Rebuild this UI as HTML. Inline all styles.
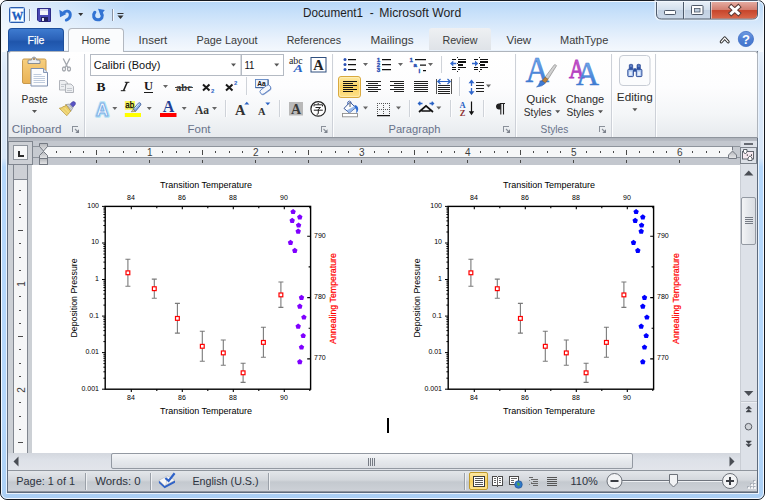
<!DOCTYPE html>
<html>
<head>
<meta charset="utf-8">
<title>Document1 - Microsoft Word</title>
<style>
html,body{margin:0;padding:0;background:#fff;}
body{width:765px;height:500px;overflow:hidden;position:relative;font-family:"Liberation Sans",sans-serif;font-size:12px;color:#222;}
.abs{position:absolute;}
#win{position:absolute;left:0;top:0;width:763px;height:498px;border:1px solid #15191f;border-radius:7px;
 background:linear-gradient(180deg,#b8d8f8 0,#dcebfb 28px,#e6f0fb 50px,#dbe8f9 70px,#d8e7f8 157px,#b4d7fb 166px,#b4d7fb 420px,#abcff4 498px);overflow:hidden;}
#win:before{content:"";position:absolute;left:0;top:0;right:0;bottom:0;border:1px solid #f3f8fe;border-radius:6px;z-index:3;}
#titlebg{position:absolute;left:1px;top:1px;width:761px;height:50px;background:linear-gradient(90deg,rgba(255,255,255,.6) 0,rgba(255,255,255,.45) 40px,rgba(255,255,255,0) 125px),linear-gradient(180deg,#b8d8f8 0,#c9e1fa 12px,#dcebfb 27px,#eaf2fc 38px,#f5f9fd 50px);}
#content{position:absolute;left:6px;top:50px;width:749px;height:441px;background:#ccd0d5;border:1px solid #5f6b7c;border-top:none;box-shadow:0 0 0 1px #e9f2fc;}
.t{position:absolute;white-space:nowrap;line-height:1;}
/* title */
#title{left:301px;top:7px;font-size:13.6px;color:#1e1e1e;}
/* tabs */
.tab{position:absolute;top:33px;font-size:12.3px;color:#3b3b3b;white-space:nowrap;line-height:1;}
#filetab{position:absolute;left:8px;top:28px;width:56px;height:24px;border-radius:4px 4px 0 0;border:1px solid #1d4f9c;border-bottom:none;box-sizing:border-box;
 background:linear-gradient(180deg,#3e7bd0 0%,#2b62b8 45%,#1f55ab 55%,#2a66bf 100%);}
#hometab{position:absolute;left:68px;top:28px;width:56px;height:24px;border:1px solid #b3b8c0;border-bottom:none;border-radius:4px 4px 0 0;background:#fbfcfd;box-sizing:border-box;}
#reviewtab{position:absolute;left:429px;top:28px;width:62px;height:22px;border-radius:3px 3px 0 0;background:linear-gradient(180deg,#eef0f3,#dfe3e8);}
/* ribbon */
#ribbon{position:absolute;left:8px;top:51px;width:750px;height:87px;border:1px solid #aeb4bc;border-bottom-color:#8f959d;border-radius:3px 3px 0 0;box-sizing:border-box;
 background:linear-gradient(180deg,#ffffff 0%,#fdfdfe 40%,#f4f6f8 72%,#e7eaee 100%);}
.gsep{position:absolute;top:54px;width:1px;height:80px;background:linear-gradient(180deg,#eceff3,#c3c8cf 50%,#d5d9df);}
.gsep2{position:absolute;top:54px;width:1px;height:80px;background:#fbfcfd;}
.glabel{position:absolute;top:123px;font-size:12px;color:#646b78;white-space:nowrap;line-height:1;}
</style>
</head>
<body>
<div id="win">
 <div id="titlebg"></div>
 <div id="content"></div>
</div>
<div id="filetab"></div>
<div id="reviewtab"></div>
<div id="ribbon"></div>
<div id="hometab"></div>
<!--RIBBON-START-->
<svg class="abs" style="left:0;top:0;" width="765" height="140" viewBox="0 0 765 140" font-family="Liberation Sans, sans-serif">
<text x="303.0" y="17.2" font-size="12.5" fill="#1e1e1e" textLength="60.0" lengthAdjust="spacingAndGlyphs" >Document1</text>
<text x="369.8" y="17.2" font-size="12.5" fill="#1e1e1e" textLength="4.0" lengthAdjust="spacingAndGlyphs" >-</text>
<text x="379.3" y="17.2" font-size="12.5" fill="#1e1e1e" textLength="81.9" lengthAdjust="spacingAndGlyphs" >Microsoft Word</text>
<text x="27.5" y="43.5" font-size="11.8" fill="#ffffff" textLength="16.9" lengthAdjust="spacingAndGlyphs" stroke="#fff" stroke-width=".25">File</text>
<text x="81.6" y="43.5" font-size="11.5" fill="#3b3b3b" textLength="28.7" lengthAdjust="spacingAndGlyphs" >Home</text>
<text x="138.6" y="43.5" font-size="11.5" fill="#3b3b3b" textLength="28.7" lengthAdjust="spacingAndGlyphs" >Insert</text>
<text x="196.5" y="43.5" font-size="11.5" fill="#3b3b3b" textLength="61.0" lengthAdjust="spacingAndGlyphs" >Page Layout</text>
<text x="286.7" y="43.5" font-size="11.5" fill="#3b3b3b" textLength="54.4" lengthAdjust="spacingAndGlyphs" >References</text>
<text x="370.5" y="43.5" font-size="11.5" fill="#3b3b3b" textLength="43.1" lengthAdjust="spacingAndGlyphs" >Mailings</text>
<text x="442.4" y="43.5" font-size="11.5" fill="#3b3b3b" textLength="35.2" lengthAdjust="spacingAndGlyphs" >Review</text>
<text x="506.4" y="43.5" font-size="11.5" fill="#3b3b3b" textLength="24.8" lengthAdjust="spacingAndGlyphs" >View</text>
<text x="560.0" y="43.5" font-size="11.5" fill="#3b3b3b" textLength="48.3" lengthAdjust="spacingAndGlyphs" >MathType</text>
<path d="M84.5 54V137" stroke="#cdd1d8"/><path d="M85.5 54V137" stroke="#fcfdfe"/>
<path d="M332.5 54V137" stroke="#cdd1d8"/><path d="M333.5 54V137" stroke="#fcfdfe"/>
<path d="M515.5 54V137" stroke="#cdd1d8"/><path d="M516.5 54V137" stroke="#fcfdfe"/>
<path d="M611.5 54V137" stroke="#cdd1d8"/><path d="M612.5 54V137" stroke="#fcfdfe"/>
<path d="M655.5 54V137" stroke="#cdd1d8"/><path d="M656.5 54V137" stroke="#fcfdfe"/>
<text x="11.8" y="132.5" font-size="11.8" fill="#68728a" textLength="49.7" lengthAdjust="spacingAndGlyphs" >Clipboard</text>
<text x="187.5" y="132.5" font-size="11.8" fill="#68728a" textLength="23.0" lengthAdjust="spacingAndGlyphs" >Font</text>
<text x="388.5" y="132.5" font-size="11.8" fill="#68728a" textLength="52.0" lengthAdjust="spacingAndGlyphs" >Paragraph</text>
<text x="540.6" y="132.5" font-size="11.8" fill="#68728a" textLength="27.7" lengthAdjust="spacingAndGlyphs" >Styles</text>
<g transform="translate(72 126)"><path d="M0.500 5.500v-5h5" fill="none" stroke="#8a909a" shape-rendering="crispEdges"/><path d="M3 3l2.500 2.500" stroke="#8a909a" stroke-width="1.100"/><path d="M7 3.300v3.700h-3.700z" fill="#7d838d"/></g>
<g transform="translate(320.5 126)"><path d="M0.500 5.500v-5h5" fill="none" stroke="#8a909a" shape-rendering="crispEdges"/><path d="M3 3l2.500 2.500" stroke="#8a909a" stroke-width="1.100"/><path d="M7 3.300v3.700h-3.700z" fill="#7d838d"/></g>
<g transform="translate(503 126)"><path d="M0.500 5.500v-5h5" fill="none" stroke="#8a909a" shape-rendering="crispEdges"/><path d="M3 3l2.500 2.500" stroke="#8a909a" stroke-width="1.100"/><path d="M7 3.300v3.700h-3.700z" fill="#7d838d"/></g>
<g transform="translate(599 126)"><path d="M0.500 5.500v-5h5" fill="none" stroke="#8a909a" shape-rendering="crispEdges"/><path d="M3 3l2.500 2.500" stroke="#8a909a" stroke-width="1.100"/><path d="M7 3.300v3.700h-3.700z" fill="#7d838d"/></g>
<text x="21.6" y="103.2" font-size="11.8" fill="#2b2b2b" textLength="26.1" lengthAdjust="spacingAndGlyphs" >Paste</text>
<path d="M32.0 110.0h5l-2.5 3z" fill="#555"/>
<text x="526.3" y="102.8" font-size="11.5" fill="#2b2b2b" textLength="29.7" lengthAdjust="spacingAndGlyphs" >Quick</text>
<text x="523.8" y="115.8" font-size="11.5" fill="#2b2b2b" textLength="27.7" lengthAdjust="spacingAndGlyphs" >Styles</text>
<path d="M555.2 110.3h5l-2.5 3z" fill="#555"/>
<text x="565.8" y="102.8" font-size="11.5" fill="#2b2b2b" textLength="38.4" lengthAdjust="spacingAndGlyphs" >Change</text>
<text x="566.5" y="115.8" font-size="11.5" fill="#2b2b2b" textLength="27.7" lengthAdjust="spacingAndGlyphs" >Styles</text>
<path d="M598.0 110.3h5l-2.5 3z" fill="#555"/>
<text x="616.8" y="101.0" font-size="11.5" fill="#2b2b2b" textLength="35.9" lengthAdjust="spacingAndGlyphs" >Editing</text>
<path d="M632.4 108.3h5l-2.5 3z" fill="#555"/>
<rect x="90.500" y="54.500" width="150.500" height="21" fill="#fff" stroke="#b4bac3"/>
<rect x="241.500" y="54.500" width="42" height="21" fill="#fff" stroke="#b4bac3"/>
<text x="93.8" y="69.0" font-size="11.8" fill="#111" textLength="66.7" lengthAdjust="spacingAndGlyphs" >Calibri (Body)</text>
<text x="244.4" y="69.0" font-size="11.8" fill="#111" textLength="10.1" lengthAdjust="spacingAndGlyphs" >11</text>
<path d="M231.0 63.5h5l-2.5 3z" fill="#555"/>
<path d="M274.2 63.5h5l-2.5 3z" fill="#555"/>
<!-- QAT -->
<g>
 <rect x="9.500" y="7.500" width="15" height="15" rx="1" fill="#fff" stroke="#2a5db0"/>
 <rect x="10.500" y="8.500" width="13" height="13" fill="none" stroke="#9fc0ea" stroke-width=".8"/>
 <text x="17.500" y="20.200" font-size="13.500" font-weight="bold" text-anchor="middle" fill="#1b5cc0" stroke="#1b5cc0" stroke-width=".3" textLength="11.500" lengthAdjust="spacingAndGlyphs" font-family="Liberation Serif, serif">W</text>
 <path d="M29.500 9V21" stroke="#8a93a3"/><path d="M30.500 9V21" stroke="#f4f8fd"/>
 <!-- save -->
 <path d="M37.500 8.500h13v13h-11.500l-1.500-1.500z" fill="#4a49b5" stroke="#2c2b86"/>
 <rect x="40" y="9" width="8" height="6" fill="#f4f4fa"/><rect x="40" y="9" width="8" height="2" fill="#d9d9ee"/>
 <rect x="41" y="17" width="7" height="4.500" fill="#23225e"/><rect x="42" y="18" width="2" height="3" fill="#e8e8f4"/>
 <!-- undo -->
 <path d="M63 13.500c2.500-3.800 7.300-2.800 7.300 1.300 0 2.800-1.800 4.400-4 5.300" fill="none" stroke="#3273d3" stroke-width="2.900" stroke-linecap="round"/>
 <path d="M59.300 9.800l.8 7.400 6.300-3.200z" fill="#3273d3"/>
 <path d="M78.200 13h5l-2.500 3z" fill="#333"/>
 <!-- redo -->
 <path d="M94.800 12.300c-2.300 2.800-1.300 7.100 2.900 7.500 4.100.2 5.800-3.800 3.700-7" fill="none" stroke="#3273d3" stroke-width="3.100" stroke-linecap="round"/>
 <path d="M98 8.800l6.800 1.200-4.200 5.400z" fill="#3273d3"/>
 <path d="M112.500 9V21" stroke="#8a93a3"/><path d="M113.500 9V21" stroke="#f4f8fd"/>
 <path d="M117.500 13.500h6" stroke="#333"/><path d="M117.500 15.500h6l-3 3.500z" fill="#333"/>
</g>
<!-- window controls -->
<defs>
 <linearGradient id="gCloseT" x1="0" y1="0" x2="0" y2="1"><stop offset="0" stop-color="#e6b0a6"/><stop offset="1" stop-color="#d27d6e"/></linearGradient>
 <linearGradient id="gCloseB" x1="0" y1="0" x2="0" y2="1"><stop offset="0" stop-color="#b7341f"/><stop offset=".6" stop-color="#c9492f"/><stop offset="1" stop-color="#d9674a"/></linearGradient>
 <linearGradient id="gBtnT" x1="0" y1="0" x2="0" y2="1"><stop offset="0" stop-color="#e9f0f8"/><stop offset="1" stop-color="#d3dfed"/></linearGradient>
 <linearGradient id="gBtnB" x1="0" y1="0" x2="0" y2="1"><stop offset="0" stop-color="#b9c9dc"/><stop offset="1" stop-color="#cbd8e8"/></linearGradient>
</defs>
<g>
 <path d="M655.500 0.500V14.500q0 5 5 5H753.500q5 0 5-5V0.500z" fill="#f4f8fc" stroke="#f4f8fc" stroke-width="2" opacity=".7"/>
 <path d="M656.500 0.500V14q0 5 5 5H752.500q5 0 5-5V0.500z" fill="url(#gBtnB)" stroke="#4e5a6b"/>
 <path d="M657 1V10H710V1z" fill="url(#gBtnT)"/>
 <path d="M710.500 1V18.500H752.500q4.500 0 4.500-4.500V1z" fill="url(#gCloseB)"/>
 <path d="M710.500 1V10H757V1z" fill="url(#gCloseT)"/>
 <path d="M683.500 1V19M710.500 1V19" stroke="#4e5a6b"/>
 <path d="M684.500 1V18.500M657.500 1V14M711.500 1V18.500" stroke="#f6f9fc" opacity=".55"/>
 <!-- minimize glyph -->
 <rect x="664.500" y="10.500" width="11" height="4" rx=".8" fill="#fdfdfe" stroke="#4e5868"/>
 <!-- maximize glyph -->
 <rect x="691.500" y="5.500" width="11.500" height="9" rx=".8" fill="#fdfdfe" stroke="#4e5868"/><rect x="694.500" y="8.500" width="5.500" height="3.500" fill="#bccbdc" stroke="#4e5868" stroke-width=".8"/>
 <!-- close X -->
 <path d="M731.300 7l7 6.300M738.300 7l-7 6.300" stroke="#5b3a36" stroke-width="4.800" stroke-linecap="square"/>
 <path d="M731.300 7l7 6.300M738.300 7l-7 6.300" stroke="#fff" stroke-width="2.900" stroke-linecap="square"/>
</g>
<!-- help + minimize ribbon -->
<defs><linearGradient id="gHelp" x1="0" y1="0" x2="0" y2="1"><stop offset="0" stop-color="#6f9be2"/><stop offset=".5" stop-color="#4f80d4"/><stop offset="1" stop-color="#4475cd"/></linearGradient></defs>
<g>
 <circle cx="745.900" cy="39" r="7.600" fill="url(#gHelp)" stroke="#3f6fc4" stroke-width=".8"/>
 <text x="745.900" y="43.800" font-size="13" font-weight="bold" text-anchor="middle" fill="#fff">?</text>
 <path d="M721.300 41.800l3.400-3.800 3.400 3.800" fill="none" stroke="#2e2e2e" stroke-width="3.200" stroke-linejoin="round" stroke-linecap="round"/>
 <path d="M721.300 41.800l3.400-3.800 3.400 3.800" fill="none" stroke="#fff" stroke-width="1.200" stroke-linejoin="round" stroke-linecap="round"/>
</g>
<!-- Clipboard group -->
<defs>
 <linearGradient id="gBoard" x1="0" y1="0" x2="0" y2="1"><stop offset="0" stop-color="#f7cf7e"/><stop offset="1" stop-color="#eab255"/></linearGradient>
 <linearGradient id="gBlueA" x1="0" y1="0" x2="0" y2="1"><stop offset="0" stop-color="#7aaef0"/><stop offset="1" stop-color="#2b62bd"/></linearGradient>
 <linearGradient id="gYel" x1="0" y1="0" x2="0" y2="1"><stop offset="0" stop-color="#fdeaa6"/><stop offset=".5" stop-color="#fbd25f"/><stop offset="1" stop-color="#fde28f"/></linearGradient>
</defs>
<g>
 <rect x="22.500" y="59" width="23.500" height="24.500" rx="1.500" fill="url(#gBoard)" stroke="#c99a4d"/>
 <path d="M28 63.500v-2.500q0-1 1-1h2.500q.5-3 2.500-3t2.500 3h2.500q1 0 1 1v2.500z" fill="#e9ebee" stroke="#7d838c" stroke-width=".9"/>
 <circle cx="34" cy="59" r="1" fill="#a0763a"/>
 <path d="M31 68.500h12.500l4 4v13.500h-16.500z" fill="#fdfdfe" stroke="#7d8eae"/>
 <path d="M43.500 68.500v4h4" fill="#dfe6f1" stroke="#7d8eae" stroke-width=".9"/>
 <path d="M33.500 74.500h8M33.500 76.500h11.500M33.500 78.500h11.500M33.500 80.500h11.500M33.500 82.500h11.500" stroke="#b9c6da" stroke-width=".9"/>
 <!-- scissors (disabled) -->
 <g stroke="#a3a7ad" fill="none" stroke-width="1.300">
  <path d="M63.200 58.500l4.800 9.500M69.800 58.500l-4.800 9.500"/>
  <ellipse cx="64" cy="69" rx="1.500" ry="2"/><ellipse cx="69" cy="69" rx="1.500" ry="2"/>
 </g>
 <!-- copy (disabled) -->
 <g stroke="#a9adb3" fill="#eceef1" stroke-width=".9">
  <path d="M59.500 80.500h5.500l2.500 2.500v7h-8z"/>
  <path d="M65.500 84h5.500l2.500 2.500v6h-8z"/>
  <path d="M61 84.500h4M61 86.500h3M67 88.500h5M67 90.500h5" stroke="#bfc3c9"/>
 </g>
 <!-- format painter -->
 <g>
  <path d="M72.300 101.900q1.500-.8 2.600.3 1 1.200.2 2.500l-2.600 2.700-2.900-2.700z" fill="#5853c4" stroke="#3a3698" stroke-width=".6"/>
  <path d="M65.800 104.600l3.800-.6 3.400 3.500-2.200 3.700z" fill="#d4d6da" stroke="#7e828a" stroke-width=".6"/>
  <path d="M67.500 105.500l3.500 4M69.200 104.800l2.800 3.200" stroke="#8d9199" stroke-width=".5"/>
  <path d="M59.300 108.200l3-.6 1.200-1.600 1 1 1.300-2.400 5 6.400-4 4.700z" fill="#ecd06a" stroke="#b39238" stroke-width=".7"/>
  <path d="M62 109.500l5 5M64.500 107.800l4.700 5" stroke="#f7e7a0" stroke-width=".8"/>
 </g>
</g>
<!-- Font group -->
<g font-family="Liberation Serif, serif">
 <!-- phonetic guide -->
 <text x="288.900" y="63.800" font-size="9.500" fill="#222" textLength="13.700" lengthAdjust="spacingAndGlyphs" font-family="Liberation Serif, serif">abc</text>
 <text x="293.500" y="72.200" font-size="11" font-weight="bold" font-style="italic" fill="#2a62c4" textLength="9.500" lengthAdjust="spacingAndGlyphs">A</text>
 <!-- char border -->
 <rect x="311" y="57.500" width="15" height="14.500" fill="#fff" stroke="#2f4f7f"/>
 <text x="318.500" y="70.300" font-size="14.500" font-weight="bold" text-anchor="middle" fill="#222">A</text>
 <!-- B I U -->
 <text x="96.600" y="90.800" font-size="13.500" font-weight="bold" fill="#1a1a1a" textLength="9" lengthAdjust="spacingAndGlyphs">B</text>
 <path d="M127.200 82.300l-3.700 8.400" stroke="#1a1a1a" stroke-width="1.500"/><path d="M124.800 82.300h4.600M120.800 90.700h4.600" stroke="#1a1a1a" stroke-width="1"/>
 <text x="144" y="90.200" font-size="12.500" font-weight="bold" fill="#1a1a1a" textLength="9" lengthAdjust="spacingAndGlyphs">U</text>
 <path d="M144 92.500h9" stroke="#1a1a1a"/>
 <!-- abc strike -->
 <text x="176" y="91" font-size="11" fill="#333" textLength="16" lengthAdjust="spacingAndGlyphs" font-weight="bold">abc</text>
 <path d="M175 87.500h18" stroke="#333" stroke-width=".9"/>
 <!-- Aa -->
 <text x="195" y="114" font-size="13.500" font-weight="bold" fill="#333" textLength="14" lengthAdjust="spacingAndGlyphs">Aa</text>
 <!-- grow / shrink -->
 <text x="235" y="114.600" font-size="15" font-weight="bold" fill="#333" textLength="10.500" lengthAdjust="spacingAndGlyphs">A</text>
 <path d="M244.300 104.600l2.500-2.800 2.500 2.800z" fill="#2a62c4"/>
 <text x="258" y="114.600" font-size="10.500" font-weight="bold" fill="#333" textLength="7.500" lengthAdjust="spacingAndGlyphs">A</text>
 <path d="M265.300 102.500h5l-2.500 2.800z" fill="#2a62c4"/>
 <!-- char shading -->
 <rect x="289" y="102" width="14" height="13.500" fill="#b9b9b9"/>
 <text x="296" y="113.800" font-size="14" font-weight="bold" text-anchor="middle" fill="#3a3a3a">A</text>
 <!-- font color -->
 <text x="168.500" y="111.800" font-size="16" font-weight="bold" text-anchor="middle" fill="#1f3f94">A</text>
 <rect x="160" y="113" width="16.500" height="4" fill="#f00"/>
</g>
<g>
 <!-- dropdown arrows -->
 <path d="M163 85h5l-2.500 3z M112.300 107h5l-2.500 3z M146.800 107h5l-2.500 3z M181.700 107h5l-2.500 3z M212 107h5l-2.500 3z" fill="#666"/>
 <!-- seps -->
 <path d="M246.500 77V95M225.500 100V117M279.500 100V117" stroke="#cfd3d9"/><path d="M247.500 77V95M226.500 100V117M280.500 100V117" stroke="#fdfdfe"/>
 <!-- subscript / superscript -->
 <path d="M203 84.500l6.500 6M209.500 84.500l-6.500 6" stroke="#1a1a1a" stroke-width="2"/>
 <text x="211" y="93" font-size="6" font-weight="bold" fill="#2a62c4">2</text>
 <path d="M226 84.500l6.500 6M232.500 84.500l-6.500 6" stroke="#1a1a1a" stroke-width="2"/>
 <text x="234" y="85" font-size="6" font-weight="bold" fill="#2a62c4">2</text>
 <!-- clear formatting -->
 <rect x="255.500" y="79.500" width="12.500" height="8" fill="#eef3fb" stroke="#5f86c4" stroke-width=".9"/>
 <path d="M255.500 87.700h12.700v-8" fill="none" stroke="#3a5a8f" stroke-width=".9"/>
 <text x="257.300" y="86.200" font-size="7" font-weight="bold" fill="#111" textLength="8.500" lengthAdjust="spacingAndGlyphs">Aa</text>
 <g transform="translate(265.600 90) rotate(-36)">
  <rect x="-6" y="-2.300" width="12" height="5.400" rx="2.500" fill="#8aa3d0"/>
  <rect x="-6" y="-2.900" width="12" height="5" rx="2.400" fill="#f6f8fd" stroke="#5b7fc0" stroke-width=".8"/>
 </g>
 <!-- text effects A -->
 <g font-family="Liberation Sans, sans-serif" font-weight="bold">
 <text x="102.200" y="115.500" font-size="18.500" text-anchor="middle" fill="#9fdcf5" stroke="#9fdcf5" stroke-width="3.600" stroke-linejoin="round" opacity=".75" textLength="12.500" lengthAdjust="spacingAndGlyphs">A</text>
 <text x="102.200" y="115.500" font-size="18.500" text-anchor="middle" fill="#f4f9ff" stroke="#7eaee6" stroke-width="1.100" stroke-linejoin="round" textLength="12.500" lengthAdjust="spacingAndGlyphs">A</text>
 </g>
 <!-- highlight -->
 <rect x="124.800" y="101" width="10.200" height="8.800" fill="#f7f55e"/>
 <text x="125.300" y="107.700" font-size="9.500" fill="#000" stroke="#000" stroke-width=".25" textLength="8.800" lengthAdjust="spacingAndGlyphs">ab</text>
 <path d="M133.300 109.200l5-6q1-.9 2.100 0 .9 1 .1 2.100l-5 6z" fill="#8db2e6" stroke="#2f4f8f" stroke-width=".8"/>
 <path d="M134.800 108.500l4.200-5" stroke="#eef4fd" stroke-width=".9"/>
 <path d="M131.300 111.800l2-2.600 2.200 2.200z" fill="#d9c8a0" stroke="#6b5a3a" stroke-width=".5"/>
 <rect x="124.800" y="113" width="16.200" height="4" fill="#ff0"/>
 <!-- enclose char -->
 <circle cx="318.200" cy="108.900" r="7.300" fill="#fff" stroke="#222" stroke-width="1.200"/>
 <path d="M318.200 103v1.500M314 104.800h8.500v1.600M314 104.800v1.600M315.500 107.500h5l-2.300 2M313.800 110.200h9M318.300 109.200v4.200q0 1-1.600.8" fill="none" stroke="#222" stroke-width="1"/>
</g>
<!-- Paragraph group -->
<circle cx="345" cy="59.6" r="1.500" fill="#2a50b4"/><circle cx="345" cy="64.6" r="1.500" fill="#2a50b4"/><circle cx="345" cy="69.6" r="1.500" fill="#2a50b4"/>
<g shape-rendering="crispEdges">

<rect x="348" y="59" width="8" height="1.250" fill="#111" shape-rendering="geometricPrecision"/>

<rect x="348" y="64" width="8" height="1.250" fill="#111" shape-rendering="geometricPrecision"/>

<rect x="348" y="69" width="8" height="1.250" fill="#111" shape-rendering="geometricPrecision"/>
<rect x="382" y="59" width="9" height="1.250" fill="#111" shape-rendering="geometricPrecision"/>
<rect x="382" y="64" width="9" height="1.250" fill="#111" shape-rendering="geometricPrecision"/>
<rect x="382" y="69" width="9" height="1.250" fill="#111" shape-rendering="geometricPrecision"/>
<rect x="415" y="59" width="11" height="1.250" fill="#111" shape-rendering="geometricPrecision"/>
<rect x="420" y="64.5" width="6" height="1.250" fill="#111" shape-rendering="geometricPrecision"/>
<rect x="423" y="70" width="3" height="1.250" fill="#111" shape-rendering="geometricPrecision"/>
</g>
<rect x="338.500" y="76.500" width="22" height="21" rx="2.500" fill="url(#gYel)" stroke="#d9a93e"/>
<rect x="339.500" y="77.500" width="20" height="19" rx="2" fill="none" stroke="#fff3c4" stroke-width=".8" opacity=".7"/>
<g shape-rendering="crispEdges">
<rect x="343" y="81" width="14" height="1.200" fill="#111"/>
<rect x="343" y="83" width="10" height="1.200" fill="#111"/>
<rect x="343" y="85" width="14" height="1.200" fill="#111"/>
<rect x="343" y="87" width="10" height="1.200" fill="#111"/>
<rect x="343" y="89" width="14" height="1.200" fill="#111"/>
<rect x="343" y="91" width="10" height="1.200" fill="#111"/>
<rect x="365.5" y="81" width="15" height="1.200" fill="#222"/>
<rect x="368.0" y="83" width="10" height="1.200" fill="#222"/>
<rect x="365.5" y="85" width="15" height="1.200" fill="#222"/>
<rect x="368.0" y="87" width="10" height="1.200" fill="#222"/>
<rect x="365.5" y="89" width="15" height="1.200" fill="#222"/>
<rect x="368.0" y="91" width="10" height="1.200" fill="#222"/>
<rect x="390" y="81" width="14" height="1.200" fill="#222"/>
<rect x="394" y="83" width="10" height="1.200" fill="#222"/>
<rect x="390" y="85" width="14" height="1.200" fill="#222"/>
<rect x="394" y="87" width="10" height="1.200" fill="#222"/>
<rect x="390" y="89" width="14" height="1.200" fill="#222"/>
<rect x="394" y="91" width="10" height="1.200" fill="#222"/>
<rect x="414" y="81" width="14" height="1.200" fill="#222"/>
<rect x="414" y="83" width="14" height="1.200" fill="#222"/>
<rect x="414" y="85" width="14" height="1.200" fill="#222"/>
<rect x="414" y="87" width="14" height="1.200" fill="#222"/>
<rect x="414" y="89" width="14" height="1.200" fill="#222"/>
<rect x="414" y="91" width="14" height="1.200" fill="#222"/>
<rect x="436" y="79" width="1" height="15" fill="#555"/><rect x="451" y="79" width="1" height="15" fill="#555"/>
<rect x="438" y="85" width="12" height="1.200" fill="#222"/>
<rect x="438" y="87" width="12" height="1.200" fill="#222"/>
<rect x="438" y="89" width="12" height="1.200" fill="#222"/>
<rect x="438" y="91" width="12" height="1.200" fill="#222"/>
<rect x="438" y="93" width="12" height="1.200" fill="#222"/>
<rect x="476" y="82" width="8" height="1" fill="#222"/>
<rect x="476" y="85" width="8" height="1" fill="#222"/>
<rect x="476" y="88" width="8" height="1" fill="#222"/>
<rect x="476" y="91" width="8" height="1" fill="#222"/>
<rect x="457" y="57" width="1" height="1" fill="#222"/><rect x="457" y="63" width="1" height="1" fill="#222"/><rect x="457" y="71" width="1" height="1" fill="#222"/><rect x="458" y="59" width="8" height="1" fill="#111"/><rect x="458" y="61" width="8" height="2" fill="#111"/><rect x="458" y="64" width="5" height="2" fill="#111"/><rect x="458" y="67" width="8" height="1" fill="#111"/><rect x="458" y="69" width="2" height="1" fill="#111"/><rect x="452" y="59" width="4" height="1" fill="#111"/><rect x="452" y="67" width="4" height="1" fill="#111"/><rect x="452" y="69" width="4" height="1" fill="#111"/><rect x="479" y="57" width="1" height="1" fill="#222"/><rect x="479" y="63" width="1" height="1" fill="#222"/><rect x="479" y="71" width="1" height="1" fill="#222"/><rect x="480" y="59" width="8" height="1" fill="#111"/><rect x="480" y="61" width="8" height="2" fill="#111"/><rect x="480" y="64" width="5" height="2" fill="#111"/><rect x="480" y="67" width="8" height="1" fill="#111"/><rect x="480" y="69" width="2" height="1" fill="#111"/><rect x="474" y="59" width="4" height="1" fill="#111"/><rect x="474" y="67" width="4" height="1" fill="#111"/><rect x="474" y="69" width="4" height="1" fill="#111"/>
<rect x="377" y="103" width="1" height="1" fill="#555"/>
<rect x="377" y="109" width="1" height="1" fill="#555"/>
<rect x="379" y="103" width="1" height="1" fill="#555"/>
<rect x="379" y="109" width="1" height="1" fill="#555"/>
<rect x="381" y="103" width="1" height="1" fill="#555"/>
<rect x="381" y="109" width="1" height="1" fill="#555"/>
<rect x="383" y="103" width="1" height="1" fill="#555"/>
<rect x="383" y="109" width="1" height="1" fill="#555"/>
<rect x="385" y="103" width="1" height="1" fill="#555"/>
<rect x="385" y="109" width="1" height="1" fill="#555"/>
<rect x="387" y="103" width="1" height="1" fill="#555"/>
<rect x="387" y="109" width="1" height="1" fill="#555"/>
<rect x="389" y="103" width="1" height="1" fill="#555"/>
<rect x="389" y="109" width="1" height="1" fill="#555"/>
<rect x="377" y="103" width="1" height="1" fill="#555"/>
<rect x="383" y="103" width="1" height="1" fill="#555"/>
<rect x="389" y="103" width="1" height="1" fill="#555"/>
<rect x="377" y="105" width="1" height="1" fill="#555"/>
<rect x="383" y="105" width="1" height="1" fill="#555"/>
<rect x="389" y="105" width="1" height="1" fill="#555"/>
<rect x="377" y="107" width="1" height="1" fill="#555"/>
<rect x="383" y="107" width="1" height="1" fill="#555"/>
<rect x="389" y="107" width="1" height="1" fill="#555"/>
<rect x="377" y="109" width="1" height="1" fill="#555"/>
<rect x="383" y="109" width="1" height="1" fill="#555"/>
<rect x="389" y="109" width="1" height="1" fill="#555"/>
<rect x="377" y="111" width="1" height="1" fill="#555"/>
<rect x="383" y="111" width="1" height="1" fill="#555"/>
<rect x="389" y="111" width="1" height="1" fill="#555"/>
<rect x="377" y="113" width="1" height="1" fill="#555"/>
<rect x="383" y="113" width="1" height="1" fill="#555"/>
<rect x="389" y="113" width="1" height="1" fill="#555"/>
<rect x="377" y="115" width="13" height="1.250" fill="#111" shape-rendering="geometricPrecision"/>
</g>
<g font-family="Liberation Sans, sans-serif" font-weight="bold" fill="#2a50b4" stroke="#2a50b4" stroke-width=".35"><text x="376.800" y="61.8" font-size="6.200">1</text><text x="376.800" y="66.8" font-size="6.200">2</text><text x="376.800" y="71.8" font-size="6.200">3</text><text x="409.500" y="61.800" font-size="6.200">1</text><text x="413.600" y="67.300" font-size="6.200">a</text><text x="418.600" y="72.800" font-size="6.200">i</text></g>
<path d="M363 63h5l-2.500 3zM398 63h5l-2.500 3zM428 63h5l-2.500 3zM486 84.500h5l-2.500 3zM363 106.500h5l-2.500 3zM396 106.500h5l-2.500 3zM436.300 106.500h5l-2.500 3z" fill="#666"/>
<path d="M441.500 56V73M459.500 77V96M409.500 100V117M450.500 100V117M483.500 100V117" stroke="#cfd3d9"/><path d="M442.500 56V73M460.500 77V96M410.500 100V117M451.500 100V117M484.500 100V117" stroke="#fdfdfe"/>
<path d="M450 63.500l3.300-3v2.200h3v1.600h-3v2.200z" fill="#2f66cc"/>
<path d="M478.300 63.500l-3.300-3v2.200h-3v1.600h3v2.200z" fill="#2f66cc"/>
<path d="M438 81.500h12M440.500 79l-2.700 2.500 2.700 2.500M447.500 79l2.700 2.500-2.700 2.500" fill="none" stroke="#2a62c4" stroke-width="1.200"/>
<path d="M471.500 80.500v5.500M471.500 88v5.500" stroke="#2f66cc" stroke-width="1.300"/><path d="M468.500 83.300l3-3.800 3 3.800zM468.500 91.200l3 3.800 3-3.800z" fill="#2f66cc"/>
<path d="M344 108.400l6-6.200 5.800 5.400-6.500 5.300z" fill="#fdfeff" stroke="#24448f" stroke-width=".9"/>
<path d="M346.500 110.500l8-4.500 1.300 1.600-6.500 5.300z" fill="#8fb4ea" opacity=".9"/>
<path d="M347.800 104.600q-.8-3.400 1.500-3.600 2.200.2 2 3" fill="none" stroke="#3a5da8" stroke-width=".9"/>
<path d="M350 102.500v4.500" stroke="#7d8088" stroke-width="1.300"/>
<path d="M354.800 105q3.500.6 3.400 4.500-.3 2.500-2 3.600.8-3.600-1.800-6.600z" fill="#2f6cd0"/>
<rect x="342.500" y="113.500" width="15" height="3.300" fill="#fff" stroke="#8e8e8e" stroke-width=".9"/>
<path d="M418.500 103.500h4M420.300 101.800l-1.800 1.700 1.800 1.700M429.500 103.500h4M431.700 101.800l1.800 1.700-1.800 1.700" fill="none" stroke="#2a62c4" stroke-width="1.300"/>
<path d="M419 112l7-6.200 7 6.200M421.500 111h9" fill="none" stroke="#111" stroke-width="1.700"/>
<g font-family="Liberation Serif, serif" font-weight="bold"><text x="459.500" y="107.800" font-size="8.500" fill="#2a62c4">A</text><text x="459.800" y="116" font-size="8.500" fill="#8c2f2f">Z</text></g>
<path d="M471.500 101.500v12" stroke="#111" stroke-width="1.200"/><path d="M468.800 111.300l2.700 4 2.700-4z" fill="#111"/>
<path d="M500 103.500h5M500.800 103.500v11M503.500 103.500v11" stroke="#222" stroke-width="1.100" fill="none"/><path d="M500.800 103.200q-4.800 0-4.800 3.200t4.800 3.200z" fill="#222"/>
<!-- Styles group -->
<defs>
 <linearGradient id="gBigA" x1="0" y1="0" x2="0" y2="1"><stop offset="0" stop-color="#86b4ee"/><stop offset=".6" stop-color="#4d89dc"/><stop offset="1" stop-color="#2f6cc4"/></linearGradient>
 <linearGradient id="gMag" x1="0" y1="0" x2="0" y2="1"><stop offset="0" stop-color="#d468d4"/><stop offset="1" stop-color="#a536b5"/></linearGradient>
 <linearGradient id="gHandle" x1="0" y1="0" x2="1" y2="1"><stop offset="0" stop-color="#fafafa"/><stop offset="1" stop-color="#a8a8a8"/></linearGradient>
</defs>
<g font-family="Liberation Serif, serif">
 <text x="537.200" y="82" font-size="36" text-anchor="middle" fill="url(#gBigA)" stroke="#3f7bd2" stroke-width=".5" textLength="23.500" lengthAdjust="spacingAndGlyphs">A</text>
 <!-- brush -->
 <path d="M554.300 64.800q1.500-.6 2.200 1l-8.500 13.500-3-2z" fill="url(#gHandle)" stroke="#7a7a7a" stroke-width=".6"/>
 <path d="M545 77.300l3 2-2.800 4-3.200-2.400z" fill="#b9803a" stroke="#7e5220" stroke-width=".5"/>
 <path d="M542 80.900l3.200 2.400q-2.500 3.300-8.700 3.700 2.800-2 3-4.200 1-1.300 2.500-1.900z" fill="#3f7bd2" stroke="#2a5cb0" stroke-width=".5"/>
 <!-- change styles -->
 <text x="576.800" y="77.500" font-size="28" text-anchor="middle" fill="url(#gMag)" stroke="#b53cc0" stroke-width=".9" textLength="15.500" lengthAdjust="spacingAndGlyphs">A</text>
 <text x="587.500" y="85.300" font-size="34" text-anchor="middle" fill="url(#gBigA)" stroke="#3f7bd2" stroke-width=".5" textLength="23" lengthAdjust="spacingAndGlyphs">A</text>
</g>
<!-- Editing -->
<rect x="619.500" y="55.500" width="30.500" height="30" rx="3.500" fill="#fbfcfd" stroke="#c8cdd5"/>
<g>
 <path d="M629.300 64.800q1.700-1.200 3.400 0v4.700h-3.400z M637 64.800q1.700-1.200 3.400 0v4.700h-3.400z" fill="#3558a8" stroke="#1f3f8f" stroke-width=".6"/>
 <path d="M630 66h2M637.700 66h2" stroke="#9db9ea" stroke-width=".8"/>
 <rect x="627.800" y="69.300" width="5.600" height="7.300" rx=".8" fill="#a9c4ef" stroke="#1f3f8f" stroke-width=".9"/>
 <rect x="636.300" y="69.300" width="5.600" height="7.300" rx=".8" fill="#a9c4ef" stroke="#1f3f8f" stroke-width=".9"/>
 <rect x="633.400" y="68.300" width="2.900" height="3.400" fill="#2a4fa0"/>
 <path d="M629.200 71.500h2.600v4h-2.600zM637.700 71.500h2.600v4h-2.600z" fill="#e6effc"/>
</g>

</svg>
<!--RIBBON-END-->
<div class="abs" style="left:8px;top:138px;width:749px;height:3px;background:linear-gradient(180deg,#adb2ba,#b9bdc5);"></div>
<div class="abs" style="left:8px;top:141px;width:732px;height:24px;background:#c3c7ce;"></div>
<div class="abs" style="left:8px;top:141px;width:25px;height:24px;box-sizing:border-box;border:1px solid #80868f;background:#cdd0d5;"></div>
<div class="abs" style="left:13px;top:145px;width:15px;height:15px;box-sizing:border-box;border:1px solid #8f959d;background:#f6f7f8;"></div>
<div class="abs" style="left:18px;top:151px;width:2px;height:5px;background:#2b2b2b;"></div><div class="abs" style="left:18px;top:155px;width:6px;height:2px;background:#2b2b2b;"></div>
<div class="abs" style="left:33px;top:146px;width:707px;height:12px;box-sizing:border-box;border-top:1px solid #8e949c;border-bottom:1px solid #8e949c;background:#c6cad0;"></div>
<div class="abs" style="left:44px;top:147px;width:689px;height:10px;background:#f6f7f8;"></div>
<svg class="abs" style="left:0;top:141px;" width="765" height="25" viewBox="0 141 765 25" shape-rendering="crispEdges"><rect x="56" y="151" width="1" height="2" fill="#4a4a4a"/><rect x="70" y="151" width="1" height="2" fill="#4a4a4a"/><rect x="83" y="151" width="1" height="2" fill="#4a4a4a"/><rect x="96" y="150" width="1" height="5" fill="#4a4a4a"/><rect x="109" y="151" width="1" height="2" fill="#4a4a4a"/><rect x="123" y="151" width="1" height="2" fill="#4a4a4a"/><rect x="136" y="151" width="1" height="2" fill="#4a4a4a"/><rect x="162" y="151" width="1" height="2" fill="#4a4a4a"/><rect x="176" y="151" width="1" height="2" fill="#4a4a4a"/><rect x="189" y="151" width="1" height="2" fill="#4a4a4a"/><rect x="202" y="150" width="1" height="5" fill="#4a4a4a"/><rect x="215" y="151" width="1" height="2" fill="#4a4a4a"/><rect x="229" y="151" width="1" height="2" fill="#4a4a4a"/><rect x="242" y="151" width="1" height="2" fill="#4a4a4a"/><rect x="268" y="151" width="1" height="2" fill="#4a4a4a"/><rect x="282" y="151" width="1" height="2" fill="#4a4a4a"/><rect x="295" y="151" width="1" height="2" fill="#4a4a4a"/><rect x="308" y="150" width="1" height="5" fill="#4a4a4a"/><rect x="321" y="151" width="1" height="2" fill="#4a4a4a"/><rect x="335" y="151" width="1" height="2" fill="#4a4a4a"/><rect x="348" y="151" width="1" height="2" fill="#4a4a4a"/><rect x="374" y="151" width="1" height="2" fill="#4a4a4a"/><rect x="388" y="151" width="1" height="2" fill="#4a4a4a"/><rect x="401" y="151" width="1" height="2" fill="#4a4a4a"/><rect x="414" y="150" width="1" height="5" fill="#4a4a4a"/><rect x="427" y="151" width="1" height="2" fill="#4a4a4a"/><rect x="441" y="151" width="1" height="2" fill="#4a4a4a"/><rect x="454" y="151" width="1" height="2" fill="#4a4a4a"/><rect x="480" y="151" width="1" height="2" fill="#4a4a4a"/><rect x="494" y="151" width="1" height="2" fill="#4a4a4a"/><rect x="507" y="151" width="1" height="2" fill="#4a4a4a"/><rect x="520" y="150" width="1" height="5" fill="#4a4a4a"/><rect x="533" y="151" width="1" height="2" fill="#4a4a4a"/><rect x="547" y="151" width="1" height="2" fill="#4a4a4a"/><rect x="560" y="151" width="1" height="2" fill="#4a4a4a"/><rect x="586" y="151" width="1" height="2" fill="#4a4a4a"/><rect x="600" y="151" width="1" height="2" fill="#4a4a4a"/><rect x="613" y="151" width="1" height="2" fill="#4a4a4a"/><rect x="626" y="150" width="1" height="5" fill="#4a4a4a"/><rect x="639" y="151" width="1" height="2" fill="#4a4a4a"/><rect x="653" y="151" width="1" height="2" fill="#4a4a4a"/><rect x="666" y="151" width="1" height="2" fill="#4a4a4a"/><rect x="692" y="151" width="1" height="2" fill="#4a4a4a"/><rect x="706" y="151" width="1" height="2" fill="#4a4a4a"/><rect x="719" y="151" width="1" height="2" fill="#4a4a4a"/><rect x="96" y="160" width="1" height="3" fill="#4a4a4a"/><rect x="149" y="160" width="1" height="3" fill="#4a4a4a"/><rect x="202" y="160" width="1" height="3" fill="#4a4a4a"/><rect x="255" y="160" width="1" height="3" fill="#4a4a4a"/><rect x="308" y="160" width="1" height="3" fill="#4a4a4a"/><rect x="361" y="160" width="1" height="3" fill="#4a4a4a"/><rect x="414" y="160" width="1" height="3" fill="#4a4a4a"/><rect x="467" y="160" width="1" height="3" fill="#4a4a4a"/><rect x="520" y="160" width="1" height="3" fill="#4a4a4a"/><rect x="573" y="160" width="1" height="3" fill="#4a4a4a"/><rect x="626" y="160" width="1" height="3" fill="#4a4a4a"/><rect x="679" y="160" width="1" height="3" fill="#4a4a4a"/></svg>
<div class="t" style="left:139.9px;top:148px;width:20px;text-align:center;font-size:10px;color:#3c3c3c;">1</div>
<div class="t" style="left:245.9px;top:148px;width:20px;text-align:center;font-size:10px;color:#3c3c3c;">2</div>
<div class="t" style="left:351.9px;top:148px;width:20px;text-align:center;font-size:10px;color:#3c3c3c;">3</div>
<div class="t" style="left:457.9px;top:148px;width:20px;text-align:center;font-size:10px;color:#3c3c3c;">4</div>
<div class="t" style="left:563.9px;top:148px;width:20px;text-align:center;font-size:10px;color:#3c3c3c;">5</div>
<div class="t" style="left:669.9px;top:148px;width:20px;text-align:center;font-size:10px;color:#3c3c3c;">6</div>
<svg class="abs" style="left:38px;top:142px;" width="12" height="24" viewBox="38 142 12 24"><defs><linearGradient id="gHg" x1="0" y1="0" x2="0" y2="1"><stop offset="0" stop-color="#b4b6ba"/><stop offset="1" stop-color="#e6e7e9"/></linearGradient></defs><path d="M39.500 143.500h8v3l-4 4.500-4-4.500z" fill="url(#gHg)" stroke="#747982"/><path d="M43.500 151.500l4 4v3h-8v-3z" fill="url(#gHg)" stroke="#747982"/><rect x="39.500" y="158.500" width="8" height="6" fill="url(#gHg)" stroke="#747982"/></svg>
<svg class="abs" style="left:726px;top:144px;" width="14" height="16" viewBox="726 144 14 16"><path d="M732.500 146.500v4" stroke="#747982"/><path d="M728.500 158.500v-3.500l4-4 4 4v3.500z" fill="url(#gHg)" stroke="#747982"/></svg>
<div class="abs" style="left:740px;top:141px;width:17px;height:7px;background:#dde1e8;border-left:1px solid #c9cdd4;box-sizing:border-box;"></div>
<div class="abs" style="left:744px;top:143px;width:9px;height:2px;background:#666a72;"></div>
<div class="abs" style="left:740px;top:147px;width:17px;height:17px;box-sizing:border-box;border:1px solid #7d838c;background:#dde1e8;"></div>
<svg class="abs" style="left:740px;top:147px;" width="17" height="17" viewBox="740 147 17 17"><rect x="742.500" y="151.500" width="11" height="7.500" fill="#f6e9f0" stroke="#5f646c"/><path d="M743.500 149.500h3.500v2.500l-1.750 2-1.750-2z" fill="#fff" stroke="#4e535b" stroke-width=".9"/><path d="M748 160.500h4v-2.500l-2-2.200-2 2.200z" fill="#fff" stroke="#4e535b" stroke-width=".9"/><rect x="746.800" y="154.300" width="1" height="1.600" fill="#444"/><rect x="751" y="154.300" width="1" height="1.600" fill="#444"/></svg>

<div class="abs" style="left:32px;top:165px;width:708px;height:288px;background:#fff;"></div>
<div class="abs" style="left:13px;top:165px;width:15px;height:288px;box-sizing:border-box;border-left:1px solid #80868f;border-right:1px solid #80868f;background:#cdd0d5;"></div>
<div class="abs" style="left:14px;top:179px;width:13px;height:274px;background:#f5f6f7;border-top:1px solid #80868f;box-sizing:border-box;"></div>
<svg class="abs" style="left:0;top:165px;" width="32" height="288" viewBox="0 165 32 288" shape-rendering="crispEdges"><rect x="19" y="190" width="2" height="1" fill="#4a4a4a"/><rect x="19" y="204" width="2" height="1" fill="#4a4a4a"/><rect x="19" y="217" width="2" height="1" fill="#4a4a4a"/><rect x="18" y="230" width="5" height="1" fill="#4a4a4a"/><rect x="19" y="243" width="2" height="1" fill="#4a4a4a"/><rect x="19" y="257" width="2" height="1" fill="#4a4a4a"/><rect x="19" y="270" width="2" height="1" fill="#4a4a4a"/><rect x="19" y="296" width="2" height="1" fill="#4a4a4a"/><rect x="19" y="310" width="2" height="1" fill="#4a4a4a"/><rect x="19" y="323" width="2" height="1" fill="#4a4a4a"/><rect x="18" y="336" width="5" height="1" fill="#4a4a4a"/><rect x="19" y="349" width="2" height="1" fill="#4a4a4a"/><rect x="19" y="363" width="2" height="1" fill="#4a4a4a"/><rect x="19" y="376" width="2" height="1" fill="#4a4a4a"/><rect x="19" y="402" width="2" height="1" fill="#4a4a4a"/><rect x="19" y="416" width="2" height="1" fill="#4a4a4a"/><rect x="19" y="429" width="2" height="1" fill="#4a4a4a"/><rect x="18" y="442" width="5" height="1" fill="#4a4a4a"/></svg>
<div class="t" style="left:12.500px;top:277.6px;width:20px;height:12px;text-align:center;font-size:10px;color:#3c3c3c;transform:rotate(-90deg);transform-origin:10px 6px;">1</div>
<div class="t" style="left:12.500px;top:383.6px;width:20px;height:12px;text-align:center;font-size:10px;color:#3c3c3c;transform:rotate(-90deg);transform-origin:10px 6px;">2</div>
<div class="abs" style="left:387px;top:418px;width:2px;height:15px;background:#000;"></div>
<div class="abs" style="left:740px;top:164px;width:17px;height:306px;background:#dde1e8;border-left:1px solid #c9cdd4;box-sizing:border-box;"></div>
<div class="abs" style="left:741px;top:197px;width:15px;height:48px;box-sizing:border-box;border:1px solid #9399a2;border-radius:2px;background:linear-gradient(90deg,#f3f4f6,#e4e7eb 50%,#dadde2);"></div>
<div class="abs" style="left:745px;top:217px;width:8px;height:1px;background:#767b84;"></div>
<div class="abs" style="left:745px;top:219px;width:8px;height:1px;background:#767b84;"></div>
<div class="abs" style="left:745px;top:221px;width:8px;height:1px;background:#767b84;"></div>
<div class="abs" style="left:745px;top:223px;width:8px;height:1px;background:#767b84;"></div>
<svg class="abs" style="left:740px;top:165px;" width="17" height="290" viewBox="740 165 17 290"><path d="M744 175.500l4.700-5 4.700 5z" fill="#4a4e55"/><path d="M744 391l4.700 5 4.700-5z" fill="#4a4e55"/><path d="M741 401.500h16" stroke="#c3c7ce"/><path d="M741 402.500h16" stroke="#eceef2"/><path d="M746 408.800l2.700-2.800 2.700 2.800zM746 412l2.700-2.800 2.700 2.800z" fill="#3d4047" stroke="#3d4047" stroke-width=".5"/><circle cx="748.500" cy="426.700" r="3.300" fill="#cfd2d7" stroke="#5b5f67"/><path d="M746 441l2.700 2.800 2.700-2.800zM746 444.200l2.700 2.800 2.700-2.800z" fill="#3d4047" stroke="#3d4047" stroke-width=".5"/></svg>
<div class="abs" style="left:8px;top:453px;width:732px;height:17px;background:linear-gradient(180deg,#d3d7de,#dde1e8 40%,#e2e5eb);"></div>
<div class="abs" style="left:111px;top:453px;width:522px;height:16px;box-sizing:border-box;border:1px solid #9399a2;border-radius:2px;background:linear-gradient(180deg,#f5f6f8,#e6e9ed 50%,#dcdfe4);"></div>
<div class="abs" style="left:368px;top:458px;width:1px;height:8px;background:#767b84;"></div>
<div class="abs" style="left:370px;top:458px;width:1px;height:8px;background:#767b84;"></div>
<div class="abs" style="left:372px;top:458px;width:1px;height:8px;background:#767b84;"></div>
<div class="abs" style="left:374px;top:458px;width:1px;height:8px;background:#767b84;"></div>
<svg class="abs" style="left:8px;top:453px;" width="732" height="17" viewBox="0 0 732 17"><path d="M10.5 3.5l-5 5 5 5z" fill="#4a4e55"/><path d="M721.5 3.5l5 5-5 5z" fill="#4a4e55"/></svg>
<svg class="abs" style="left:0;top:165px;" width="740" height="288" viewBox="0 165 740 288" font-family="Liberation Sans, sans-serif">
<defs><g id="chart">
<rect x="105.2" y="206.4" width="205.4" height="182.8" fill="none" stroke="#000" stroke-width="1.400"/>
<path d="M105.2 206.4h-3.200M105.2 232.0h-1.800M105.2 225.5h-1.800M105.2 220.9h-1.800M105.2 217.4h-1.800M105.2 214.5h-1.800M105.2 212.1h-1.800M105.2 209.9h-1.800M105.2 208.1h-1.800M105.2 243.0h-3.200M105.2 268.5h-1.800M105.2 262.1h-1.800M105.2 257.5h-1.800M105.2 254.0h-1.800M105.2 251.1h-1.800M105.2 248.6h-1.800M105.2 246.5h-1.800M105.2 244.6h-1.800M105.2 279.5h-3.200M105.2 305.1h-1.800M105.2 298.6h-1.800M105.2 294.1h-1.800M105.2 290.5h-1.800M105.2 287.6h-1.800M105.2 285.2h-1.800M105.2 283.1h-1.800M105.2 281.2h-1.800M105.2 316.1h-3.200M105.2 341.6h-1.800M105.2 335.2h-1.800M105.2 330.6h-1.800M105.2 327.1h-1.800M105.2 324.2h-1.800M105.2 321.7h-1.800M105.2 319.6h-1.800M105.2 317.8h-1.800M105.2 352.6h-3.200M105.2 378.2h-1.800M105.2 371.8h-1.800M105.2 367.2h-1.800M105.2 363.6h-1.800M105.2 360.8h-1.800M105.2 358.3h-1.800M105.2 356.2h-1.800M105.2 354.3h-1.800M105.2 389.2h-3.200" stroke="#000" stroke-width="1" fill="none"/>
<path d="M131.3 206.4v2.8M131.3 389.2v2.8M156.8 206.4v1.8M156.8 389.2v1.8M182.3 206.4v2.8M182.3 389.2v2.8M207.8 206.4v1.8M207.8 389.2v1.8M233.3 206.4v2.8M233.3 389.2v2.8M258.8 206.4v1.8M258.8 389.2v1.8M284.3 206.4v2.8M284.3 389.2v2.8M309.8 206.4v1.8M309.8 389.2v1.8" stroke="#000" stroke-width="1.1" fill="none"/>
<path d="M310.6 236.3h-3.4M310.6 266.9h-2.0M310.6 297.6h-3.4M310.6 328.3h-2.0M310.6 358.9h-3.4" stroke="#000" stroke-width="1.1" fill="none"/>
<text x="131.0" y="199.800" font-size="7" text-anchor="middle" fill="#000">84</text>
<text x="131.0" y="400.300" font-size="7" text-anchor="middle" fill="#000">84</text>
<text x="182.0" y="199.800" font-size="7" text-anchor="middle" fill="#000">86</text>
<text x="182.0" y="400.300" font-size="7" text-anchor="middle" fill="#000">86</text>
<text x="233.0" y="199.800" font-size="7" text-anchor="middle" fill="#000">88</text>
<text x="233.0" y="400.300" font-size="7" text-anchor="middle" fill="#000">88</text>
<text x="284.0" y="199.800" font-size="7" text-anchor="middle" fill="#000">90</text>
<text x="284.0" y="400.300" font-size="7" text-anchor="middle" fill="#000">90</text>
<text x="99" y="207.8" font-size="7" text-anchor="end" fill="#000">100</text>
<text x="99" y="244.4" font-size="7" text-anchor="end" fill="#000">10</text>
<text x="99" y="280.9" font-size="7" text-anchor="end" fill="#000">1</text>
<text x="99" y="317.5" font-size="7" text-anchor="end" fill="#000">0.1</text>
<text x="99" y="354.0" font-size="7" text-anchor="end" fill="#000">0.01</text>
<text x="99" y="390.6" font-size="7" text-anchor="end" fill="#000">0.001</text>
<text x="314" y="238.2" font-size="7" fill="#000">790</text>
<text x="314" y="298.9" font-size="7" fill="#000">780</text>
<text x="314" y="360.2" font-size="7" fill="#000">770</text>
<text x="206" y="188" font-size="9" text-anchor="middle" fill="#000">Transition Temperature</text>
<text x="206" y="414" font-size="9" text-anchor="middle" fill="#000">Transition Temperature</text>
<text transform="translate(76.500 298) rotate(-90)" font-size="8.800" text-anchor="middle" fill="#000">Deposition Pressure</text>
<text transform="translate(335.800 298.500) rotate(-90)" font-size="8.800" text-anchor="middle" fill="#f00" stroke="#f00" stroke-width=".2">Annealing Temperature</text>
<path d="M127.9 259.3V286.3M125.4 259.3h5M125.4 286.3h5M154.3 279.1V298.3M151.8 279.1h5M151.8 298.3h5M177.4 303.4V333.1M174.9 303.4h5M174.9 333.1h5M202.3 331.3V361.3M199.8 331.3h5M199.8 361.3h5M223.3 340.0V365.2M220.8 340.0h5M220.8 365.2h5M243.1 363.3V382.4M240.6 363.3h5M240.6 382.4h5M263.4 327.3V357.3M260.9 327.3h5M260.9 357.3h5M280.9 282.0V307.4M278.4 282.0h5M278.4 307.4h5" stroke="#7a7a7a" stroke-width="1.1" fill="none"/>
<rect x="126.0" y="270.9" width="3.800" height="3.800" fill="#fff" stroke="#f00" stroke-width="1.2"/>
<rect x="152.4" y="286.8" width="3.800" height="3.800" fill="#fff" stroke="#f00" stroke-width="1.2"/>
<rect x="175.5" y="316.5" width="3.800" height="3.800" fill="#fff" stroke="#f00" stroke-width="1.2"/>
<rect x="200.4" y="344.4" width="3.800" height="3.800" fill="#fff" stroke="#f00" stroke-width="1.2"/>
<rect x="221.4" y="351.0" width="3.800" height="3.800" fill="#fff" stroke="#f00" stroke-width="1.2"/>
<rect x="241.2" y="370.9" width="3.800" height="3.800" fill="#fff" stroke="#f00" stroke-width="1.2"/>
<rect x="261.5" y="340.5" width="3.800" height="3.800" fill="#fff" stroke="#f00" stroke-width="1.2"/>
<rect x="279.0" y="293.0" width="3.800" height="3.800" fill="#fff" stroke="#f00" stroke-width="1.2"/>
<path transform="translate(293.1 211.7)" d="M0-2.800L2.700-.8 1.700 2.400H-1.700L-2.700-.8z" fill="currentColor"/>
<path transform="translate(299.8 217.0)" d="M0-2.800L2.700-.8 1.700 2.400H-1.700L-2.700-.8z" fill="currentColor"/>
<path transform="translate(292.2 220.6)" d="M0-2.800L2.700-.8 1.700 2.400H-1.700L-2.700-.8z" fill="currentColor"/>
<path transform="translate(298.6 225.2)" d="M0-2.800L2.700-.8 1.700 2.400H-1.700L-2.700-.8z" fill="currentColor"/>
<path transform="translate(298.2 231.4)" d="M0-2.800L2.700-.8 1.700 2.400H-1.700L-2.700-.8z" fill="currentColor"/>
<path transform="translate(290.5 242.5)" d="M0-2.800L2.700-.8 1.700 2.400H-1.700L-2.700-.8z" fill="currentColor"/>
<path transform="translate(294.8 250.6)" d="M0-2.800L2.700-.8 1.700 2.400H-1.700L-2.700-.8z" fill="currentColor"/>
<path transform="translate(301.5 297.5)" d="M0-2.800L2.700-.8 1.700 2.400H-1.700L-2.700-.8z" fill="currentColor"/>
<path transform="translate(299.8 306.4)" d="M0-2.800L2.700-.8 1.700 2.400H-1.700L-2.700-.8z" fill="currentColor"/>
<path transform="translate(303.9 317.2)" d="M0-2.800L2.700-.8 1.700 2.400H-1.700L-2.700-.8z" fill="currentColor"/>
<path transform="translate(298.2 326.3)" d="M0-2.800L2.700-.8 1.700 2.400H-1.700L-2.700-.8z" fill="currentColor"/>
<path transform="translate(303.2 335.7)" d="M0-2.800L2.700-.8 1.700 2.400H-1.700L-2.700-.8z" fill="currentColor"/>
<path transform="translate(301.5 347.2)" d="M0-2.800L2.700-.8 1.700 2.400H-1.700L-2.700-.8z" fill="currentColor"/>
<path transform="translate(299.8 361.8)" d="M0-2.800L2.700-.8 1.700 2.400H-1.700L-2.700-.8z" fill="currentColor"/>
</g></defs>
<use href="#chart" color="#7f00ff"/>
<use href="#chart" x="343" color="#0000ff"/>
</svg>


<div class="abs" style="left:8px;top:470px;width:749px;height:22px;box-sizing:border-box;border-top:1px solid #8f959d;border-bottom:1px solid #8f959d;background:linear-gradient(180deg,#e3e6ea 0%,#d3d7dc 45%,#c4c9cf 55%,#cdd1d7 100%);"></div>
<div class="abs" style="left:85px;top:473px;width:1px;height:17px;background:#9aa0a8;"></div><div class="abs" style="left:86px;top:473px;width:1px;height:17px;background:#eef0f3;"></div>
<div class="abs" style="left:150px;top:473px;width:1px;height:17px;background:#9aa0a8;"></div><div class="abs" style="left:151px;top:473px;width:1px;height:17px;background:#eef0f3;"></div>
<div class="abs" style="left:268px;top:473px;width:1px;height:17px;background:#9aa0a8;"></div><div class="abs" style="left:269px;top:473px;width:1px;height:17px;background:#eef0f3;"></div>
<div class="abs" style="left:464px;top:473px;width:1px;height:17px;background:#9aa0a8;"></div><div class="abs" style="left:465px;top:473px;width:1px;height:17px;background:#eef0f3;"></div>
<svg class="abs" style="left:0;top:470px;" width="765" height="24" viewBox="0 470 765 24" font-family="Liberation Sans, sans-serif" font-size="11.800" fill="#2d3340"><text x="16.300" y="484.700" textLength="58.700" lengthAdjust="spacingAndGlyphs">Page: 1 of 1</text><text x="95.200" y="484.700" textLength="45.500" lengthAdjust="spacingAndGlyphs">Words: 0</text><text x="192.400" y="484.700" textLength="66.200" lengthAdjust="spacingAndGlyphs">English (U.S.)</text><text x="570.500" y="484.700" textLength="27.300" lengthAdjust="spacingAndGlyphs">110%</text></svg>
<svg class="abs" style="left:156px;top:471px;" width="24" height="20" viewBox="156 471 24 20"><path d="M158.900 480.500L164.600 485.800 175 480.300V482.800L164.600 488.300 158.900 483z" fill="#2f62c8"/><path d="M158.900 480.300L167.500 475.800 175 480.200 164.600 485.700z" fill="#f6f7f9" stroke="#a3a6ac" stroke-width=".5"/><path d="M167.200 476.500L166 485" stroke="#c9ccd2" stroke-width=".8"/><path d="M165.300 478L168.600 480.900 174.600 473.300" fill="none" stroke="#2f62c8" stroke-width="2.200"/></svg>
<div class="abs" style="left:469px;top:472px;width:19px;height:18px;box-sizing:border-box;border:1px solid #c29b29;border-radius:2px;background:linear-gradient(180deg,#fde9a8,#fbd15d 50%,#fde28d);"></div>
<svg class="abs" style="left:469px;top:472px;" width="95" height="19" viewBox="0 0 95 19" shape-rendering="crispEdges"><rect x="4.500" y="4.500" width="11" height="10" fill="#fff" stroke="#3c3c3c"/><path d="M6 6.500h8M6 8.500h8M6 10.5h8M6 12.5h8" stroke="#555"/><path d="M23.500 4.500h4l1 1 1-1h4v9h-4l-1 1-1-1h-4z" fill="#fff" stroke="#4a4a4a"/><path d="M28.500 5.500v8M25 6.500h2M25 8.500h2M25 10.5h2M30 6.500h2M30 8.500h2M30 10.5h2" stroke="#666"/><rect x="40.5" y="4.500" width="9" height="8" fill="#fff" stroke="#4a4a4a"/><path d="M42 6.500h6M42 8.500h3M42 10.5h3" stroke="#666"/><path d="M60 5.500h4M62 7.500h7M64 9.500h5M62 11.5h7M64 13.5h5" stroke="#666"/><path d="M60 8.500h1M62 10.5h1M60 12.5h1" stroke="#888"/><path d="M78 5.500h10M78 7.500h10M78 9.500h10M78 11.5h10M78 13.5h10" stroke="#555"/></svg>
<svg class="abs" style="left:514px;top:480px;" width="10" height="10" viewBox="0 0 10 10"><circle cx="4.500" cy="4.500" r="3.800" fill="#2f78c8" stroke="#1f4f8c" stroke-width=".6"/><path d="M3 2.500q1.500-.5 2.500 1t-1 2.500q-1.500-.5-1.500-3.500z" fill="#4aa84a"/></svg>
<div class="abs" style="left:622px;top:480px;width:100px;height:1px;background:#70757e;"></div><div class="abs" style="left:622px;top:481px;width:100px;height:1px;background:#eef0f3;"></div>
<svg class="abs" style="left:604px;top:471px;" width="140" height="21" viewBox="0 0 140 21"><circle cx="10.5" cy="10" r="7.500" fill="#f2f3f5" stroke="#6d727a"/><rect x="6.500" y="9" width="8" height="2" fill="#3a3d43"/><circle cx="126" cy="10" r="7.500" fill="#f2f3f5" stroke="#6d727a"/><rect x="122" y="9" width="8" height="2" fill="#3a3d43"/><rect x="125" y="6" width="2" height="8" fill="#3a3d43"/><path d="M65.500 3.500h8v8.500l-4 4-4-4z" fill="#f1f2f4" stroke="#6d727a"/></svg>
<svg class="abs" style="left:745px;top:479px;" width="12" height="12" viewBox="0 0 12 12" shape-rendering="crispEdges"><g fill="#aab0b9"><rect x="8" y="1" width="2" height="2"/><rect x="5" y="4" width="2" height="2"/><rect x="8" y="4" width="2" height="2"/><rect x="2" y="7" width="2" height="2"/><rect x="5" y="7" width="2" height="2"/><rect x="8" y="7" width="2" height="2"/></g><g fill="#f3f4f6"><rect x="9" y="2" width="2" height="2"/><rect x="6" y="5" width="2" height="2"/><rect x="9" y="5" width="2" height="2"/><rect x="3" y="8" width="2" height="2"/><rect x="6" y="8" width="2" height="2"/><rect x="9" y="8" width="2" height="2"/></g></svg>

</body>
</html>
